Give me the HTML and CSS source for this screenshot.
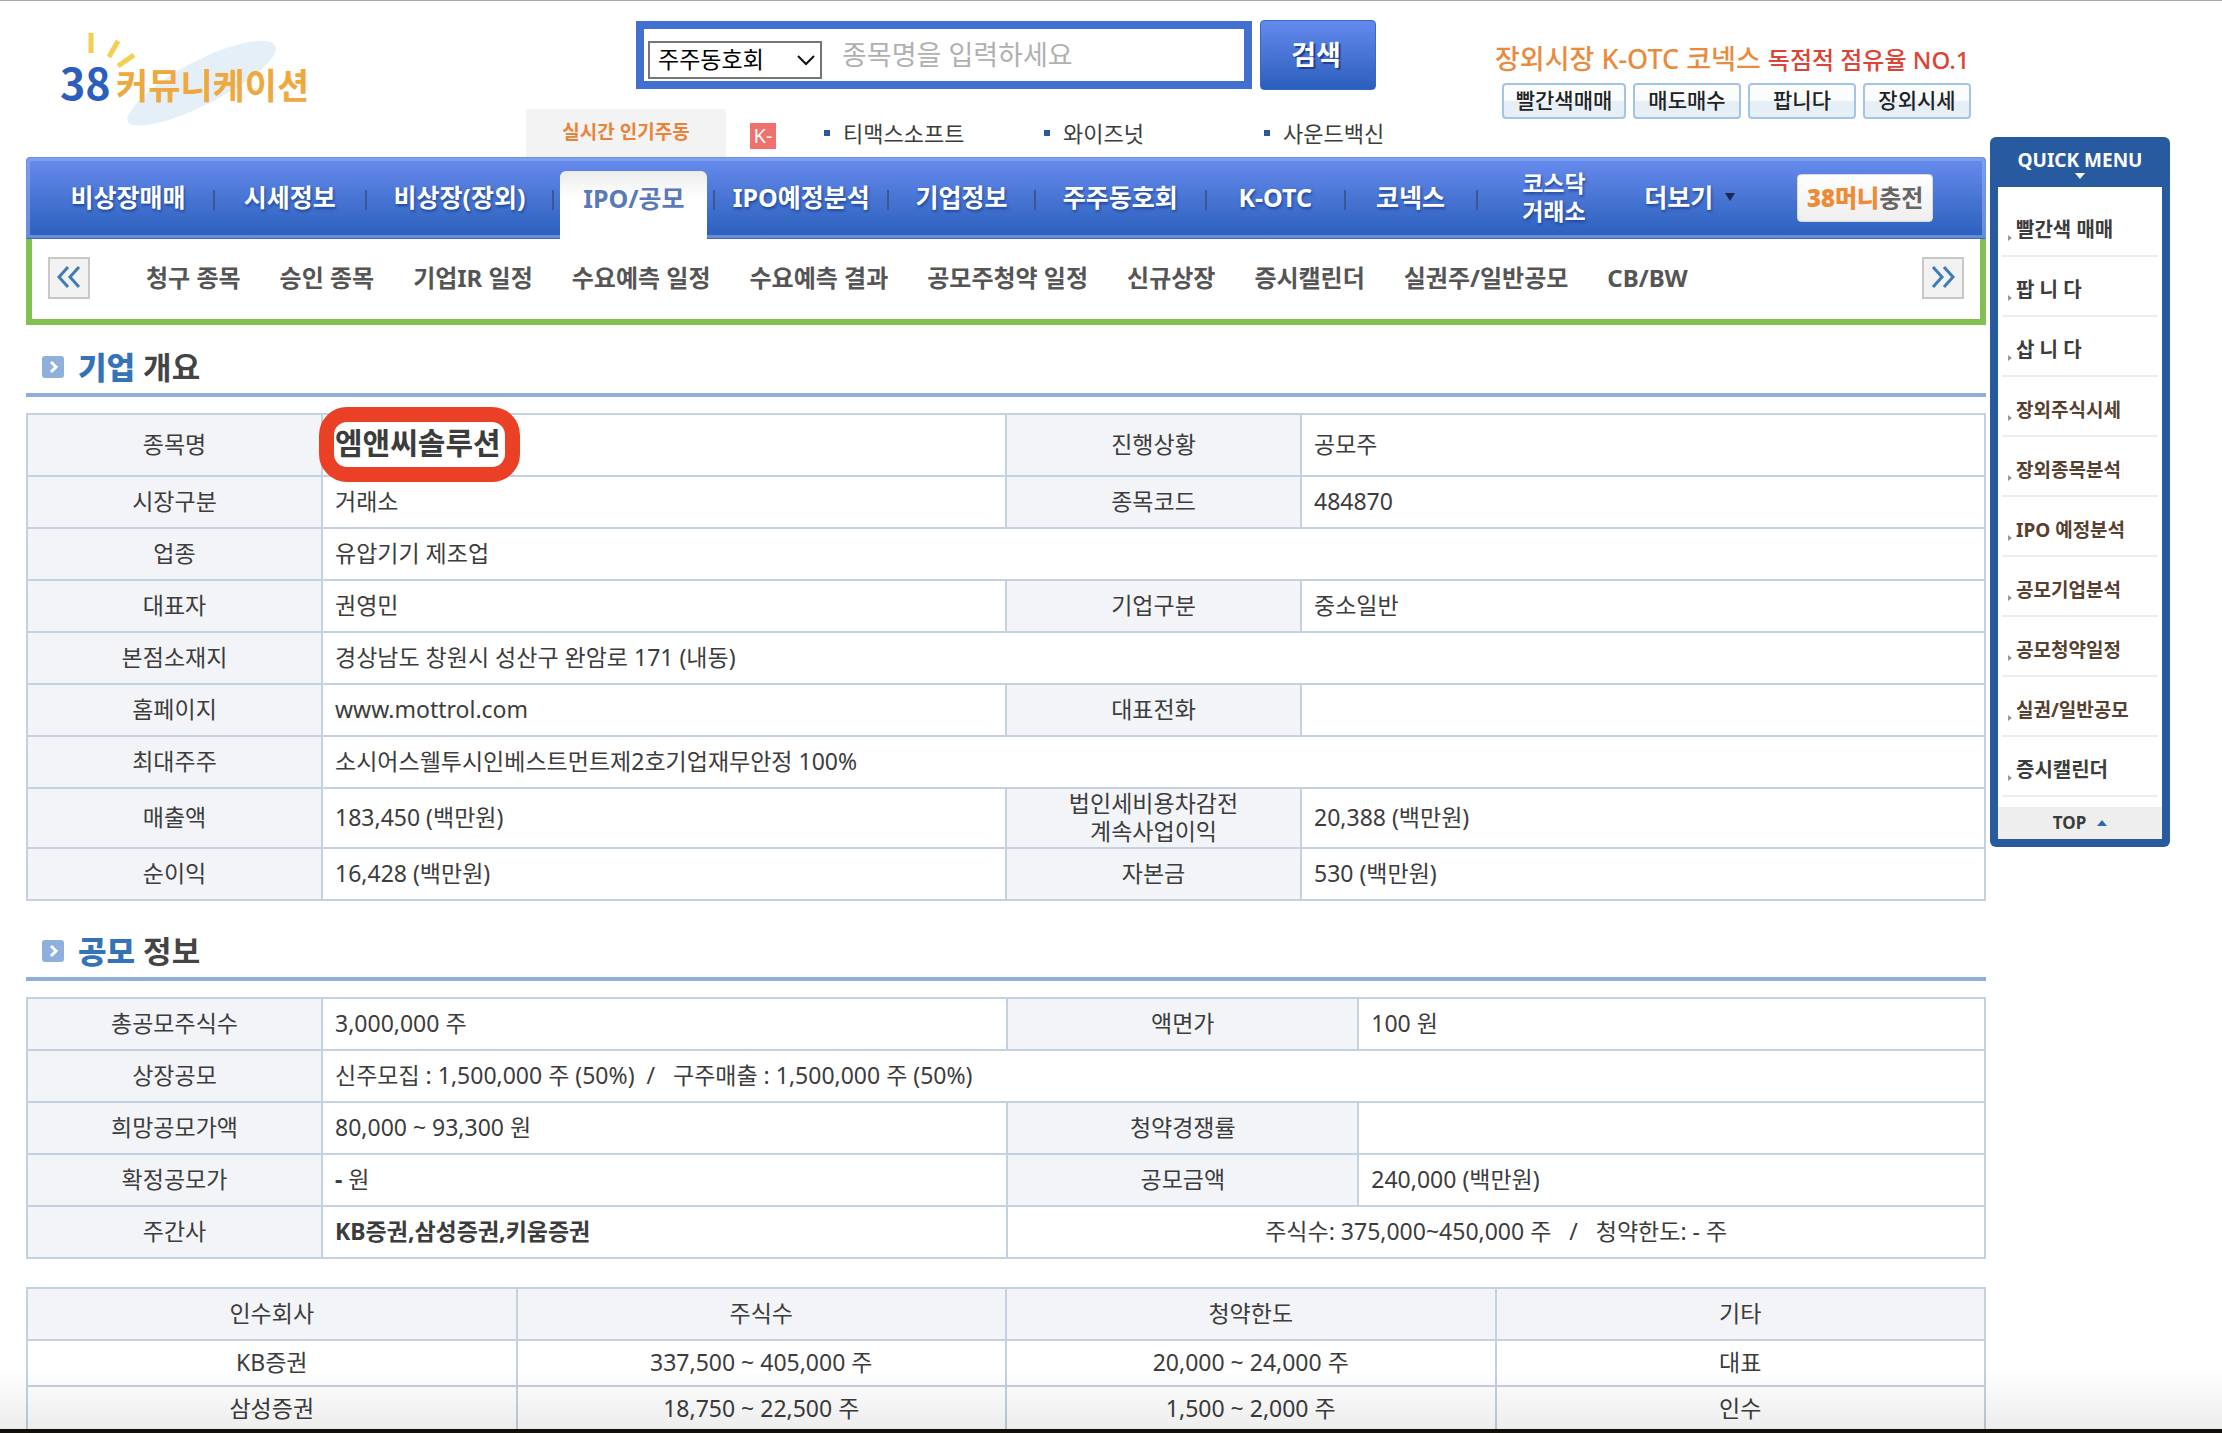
FILE: index.html
```html
<!DOCTYPE html>
<html lang="ko">
<head>
<meta charset="utf-8">
<title>38커뮤니케이션 - 엠앤씨솔루션</title>
<link rel="stylesheet" href="styles.css">
</head>
<body>
<div class="shell">
  <div class="main">
    <header class="header">
      <a class="logo" href="#" aria-label="38커뮤니케이션">
        <svg width="320" height="110" viewBox="0 0 320 110">
          <path d="M92 96 C86 88 118 55 160 35 C200 15 238 8 240 22 C241 36 205 62 165 81 C130 98 98 104 92 96Z" fill="#e4eff7"/>
          <g stroke="#f6cd50" stroke-width="5"><path d="M55 7V27M82 15L73 31M98 29L82 40"/></g>
          <text class="logo-num" x="24" y="74">38</text>
          <text class="logo-name" x="80" y="73">커뮤니케이션</text>
        </svg>
      </a>
      <div class="center">
        <form class="search">
          <div class="search-box">
            <div class="picker">
              <select aria-label="검색 구분"><option>주주동호회</option></select>
              <svg width="18" height="12" viewBox="0 0 18 12"><path d="M1 2L9 10L17 2" fill="none" stroke="#111" stroke-width="2"/></svg>
            </div>
            <input type="text" aria-label="종목명" placeholder="종목명을 입력하세요">
          </div>
          <button type="submit">검색</button>
        </form>
        <div class="hot">
          <strong class="hot-title">실시간 인기주동</strong>
          <span class="hot-mark">K-</span>
          <a href="#">티맥스소프트</a>
          <a href="#">와이즈넛</a>
          <a href="#">사운드백신</a>
        </div>
      </div>
      <div class="promo">
        <p class="slogan">장외시장 K-OTC 코넥스 <em>독점적 점유율 NO.1</em></p>
        <div class="promo-links">
          <button type="button" class="wide">빨간색매매</button>
          <button type="button">매도매수</button>
          <button type="button">팝니다</button>
          <button type="button">장외시세</button>
        </div>
      </div>
    </header>

    <nav class="nav" aria-label="주 메뉴">
      <a href="#" class="first">비상장매매</a>
      <a href="#">시세정보</a>
      <a href="#">비상장(장외)</a>
      <a href="#" class="current"><span>IPO/공모</span></a>
      <a href="#">IPO예정분석</a>
      <a href="#">기업정보</a>
      <a href="#">주주동호회</a>
      <a href="#">K-OTC</a>
      <a href="#">코넥스</a>
      <a href="#" class="plain stacked">코스닥<br>거래소</a>
      <a href="#" class="plain more">더보기<svg width="10" height="8" viewBox="0 0 10 8"><path d="M0 0H10L5 8Z" fill="#1a2a55"/></svg></a>
      <div class="money"><button type="button"><b>38머니</b>충전</button></div>
    </nav>

    <nav class="subnav" aria-label="IPO/공모 메뉴">
      <button type="button" class="arrow" aria-label="이전"><svg width="24" height="22" viewBox="0 0 24 22"><path d="M11 1L2 11L11 21M22 1L13 11L22 21" fill="none" stroke="#3f7cb5" stroke-width="3"/></svg></button>
      <div class="subnav-list">
        <a href="#">청구 종목</a>
        <a href="#">승인 종목</a>
        <a href="#">기업IR 일정</a>
        <a href="#">수요예측 일정</a>
        <a href="#">수요예측 결과</a>
        <a href="#">공모주청약 일정</a>
        <a href="#">신규상장</a>
        <a href="#">증시캘린더</a>
        <a href="#">실권주/일반공모</a>
        <a href="#">CB/BW</a>
      </div>
      <button type="button" class="arrow" aria-label="다음"><svg width="24" height="22" viewBox="0 0 24 22"><path d="M2 1L11 11L2 21M13 1L22 11L13 21" fill="none" stroke="#3f7cb5" stroke-width="3"/></svg></button>
    </nav>

    <h2 class="title"><svg width="22" height="22" viewBox="0 0 22 22"><rect width="22" height="22" rx="3" fill="#8fb0dc"/><path d="M9 6L14 11L9 16" fill="none" stroke="#fff" stroke-width="3"/></svg><span><b>기업</b> 개요</span></h2>
    <table class="info">
      <colgroup><col class="label"><col><col class="label"><col></colgroup>
      <tr class="tall"><th>종목명</th><td><strong class="company">엠앤씨솔루션</strong></td><th>진행상황</th><td>공모주</td></tr>
      <tr><th>시장구분</th><td>거래소</td><th>종목코드</th><td>484870</td></tr>
      <tr><th>업종</th><td colspan="3">유압기기 제조업</td></tr>
      <tr><th>대표자</th><td>권영민</td><th>기업구분</th><td>중소일반</td></tr>
      <tr><th>본점소재지</th><td colspan="3">경상남도 창원시 성산구 완암로 171 (내동)</td></tr>
      <tr><th>홈페이지</th><td><a href="#">www.mottrol.com</a></td><th>대표전화</th><td></td></tr>
      <tr><th>최대주주</th><td colspan="3">소시어스웰투시인베스트먼트제2호기업재무안정 100%</td></tr>
      <tr class="double"><th>매출액</th><td>183,450 (백만원)</td><th>법인세비용차감전<br>계속사업이익</th><td>20,388 (백만원)</td></tr>
      <tr><th>순이익</th><td>16,428 (백만원)</td><th>자본금</th><td>530 (백만원)</td></tr>
    </table>

    <h2 class="title"><svg width="22" height="22" viewBox="0 0 22 22"><rect width="22" height="22" rx="3" fill="#8fb0dc"/><path d="M9 6L14 11L9 16" fill="none" stroke="#fff" stroke-width="3"/></svg><span><b>공모</b> 정보</span></h2>
    <table class="info">
      <colgroup><col class="label"><col class="value"><col class="label-wide"><col></colgroup>
      <tr><th>총공모주식수</th><td>3,000,000 주</td><th>액면가</th><td>100 원</td></tr>
      <tr><th>상장공모</th><td colspan="3">신주모집 : 1,500,000 주 (50%) &nbsp;/ &nbsp; 구주매출 : 1,500,000 주 (50%)</td></tr>
      <tr><th>희망공모가액</th><td>80,000 ~ 93,300 원</td><th>청약경쟁률</th><td></td></tr>
      <tr><th>확정공모가</th><td><b>-</b> 원</td><th>공모금액</th><td>240,000 (백만원)</td></tr>
      <tr><th>주간사</th><td><b>KB증권,삼성증권,키움증권</b></td><td colspan="2" class="mid">주식수: 375,000~450,000 주 &nbsp; / &nbsp; 청약한도: - 주</td></tr>
    </table>

    <table class="info members">
      <thead><tr><th>인수회사</th><th>주식수</th><th>청약한도</th><th>기타</th></tr></thead>
      <tbody>
        <tr><td>KB증권</td><td>337,500 ~ 405,000 주</td><td>20,000 ~ 24,000 주</td><td>대표</td></tr>
        <tr><td>삼성증권</td><td>18,750 ~ 22,500 주</td><td>1,500 ~ 2,000 주</td><td>인수</td></tr>
      </tbody>
    </table>
  </div>

  <aside class="quick">
    <h3>QUICK MENU<svg width="10" height="6" viewBox="0 0 10 6"><path d="M0 0H10L5 6Z" fill="#fff"/></svg></h3>
    <ul>
      <li><a href="#">빨간색 매매</a></li>
      <li><a href="#">팝 니 다</a></li>
      <li><a href="#">삽 니 다</a></li>
      <li class="brown"><a href="#">장외주식시세</a></li>
      <li class="brown"><a href="#">장외종목분석</a></li>
      <li class="brown"><a href="#">IPO 예정분석</a></li>
      <li class="brown"><a href="#">공모기업분석</a></li>
      <li class="brown"><a href="#">공모청약일정</a></li>
      <li class="brown"><a href="#">실권/일반공모</a></li>
      <li><a href="#">증시캘린더</a></li>
    </ul>
    <a class="top" href="#">TOP<svg width="10" height="6" viewBox="0 0 10 6"><path d="M0 6H10L5 0Z" fill="#3068b0"/></svg></a>
  </aside>
</div>
<div class="page-edge"></div>
</body>
</html>
```

FILE: styles.css
```css
* { box-sizing: border-box; }

body {
  margin: 0;
  border-top: 1px solid #a0b29f;
  background: #fff;
  color: #3c3c3c;
  font: 23px/28px "Noto Sans", "Noto Sans CJK KR", sans-serif;
}

a { color: inherit; text-decoration: none; }
button, input, select { font-family: inherit; color: inherit; }
svg { display: block; flex: none; }

.shell {
  display: flex;
  align-items: flex-start;
  gap: 4px;
  padding: 0 52px 0 26px;
}
.main { flex: 1; min-width: 0; }

/* Header */
.header {
  display: grid;
  grid-template-columns: 500px 1fr 491px;
  height: 156px;
}
.logo { padding: 25px 0 0 10px; }
.logo-num { font: 700 43px "Noto Sans CJK KR", sans-serif; fill: #2c5fbd; }
.logo-name { font: 700 35px "Noto Sans CJK KR", sans-serif; fill: #efa83e; }

.center {
  display: flex;
  flex-direction: column;
  justify-content: space-between;
}
.search {
  display: flex;
  align-items: center;
  gap: 8px;
  padding: 19px 0 0 110px;
}
.search-box {
  display: flex;
  align-items: center;
  width: 616px;
  height: 68px;
  padding: 4px;
  border: 8px solid #4170d0;
}
.picker {
  display: grid;
  align-items: center;
  width: 174px;
  margin-top: 10px;
}
.picker select, .picker svg { grid-area: 1 / 1; }
.picker select {
  width: 100%;
  height: 38px;
  padding: 0 8px 2px;
  border: 2px solid #767676;
  border-radius: 0;
  background: #fff;
  color: #000;
  font-size: 23px;
  appearance: none;
}
.picker svg { justify-self: end; margin-right: 7px; pointer-events: none; }
.search-box input {
  flex: 1;
  min-width: 0;
  height: 44px;
  padding: 0 20px 2px;
  border: 0;
  outline: 0;
  background: none;
  font-size: 27px;
}
.search-box input::placeholder { color: #b0b0b0; }
.search button {
  width: 116px;
  height: 70px;
  padding: 0 4px 4px 0;
  border: 1px solid #3a68c8;
  border-radius: 4px;
  background: linear-gradient(#6489ee, #2b5fbc);
  color: #fff;
  font-size: 27px;
  font-weight: 700;
  text-shadow: 2px 2px 1px #1d3f8c;
}

.hot { display: flex; align-items: center; height: 48px; font-size: 22px; }
.hot-title {
  width: 200px;
  padding-bottom: 2px;
  background: #f3f3f3;
  color: #e8833a;
  font-size: 19px;
  line-height: 46px;
  text-align: center;
}
.hot-mark {
  width: 26px;
  margin: 6px 48px 0 24px;
  background: #f0706c;
  color: #fff;
  font-size: 20px;
  line-height: 26px;
  text-align: center;
}
.hot a { display: flex; align-items: center; gap: 13px; width: 220px; }
.hot a::before { content: ""; width: 6px; height: 6px; background: #2a5a9c; }

.promo { padding-top: 42px; }
.slogan { margin: 0; color: #e88b3e; font-size: 27px; line-height: 32px; font-weight: 500; white-space: nowrap; }
.slogan em { color: #dc4436; font-size: 24px; font-style: normal; }
.promo-links { display: flex; gap: 7px; padding: 7px 0 0 7px; }
.promo-links button {
  width: 108px;
  height: 36px;
  padding: 0 0 3px;
  border: 2px solid #a3c4e6;
  border-radius: 4px;
  background: linear-gradient(#fafcfe 50%, #e6eef6 50%);
  color: #222;
  font-size: 21px;
  line-height: 28px;
  font-weight: 500;
}
.promo-links .wide { width: 124px; }

/* Main menu */
.nav {
  display: grid;
  grid-template-columns: 188fr 152fr 188fr 161fr 174fr 147fr 171fr 139fr 132fr 155fr 113fr 240fr;
  height: 82px;
  border: 1px solid #6d90de;
  border-bottom-color: #4a66b0;
  border-radius: 4px 4px 0 0;
  background: linear-gradient(#678bee, #2a5fbb);
  box-shadow: inset 0 0 0 3px #8eabee99;
  color: #fff;
  font-size: 25px;
  font-weight: 700;
}
.nav > a {
  display: flex;
  align-items: center;
  justify-content: center;
  padding: 0 2px 2px 0;
  background: linear-gradient(#3a5796, #3a5796) right 32px / 2px 20px no-repeat;
  text-shadow: 1px 2px 3px #1f4596;
  white-space: nowrap;
}
.nav > a.first { padding-left: 16px; }
.nav > a.plain { background: none; }
.nav > a.stacked { font-size: 23px; line-height: 28px; }
.nav > a.more { gap: 12px; padding-left: 4px; }
.nav > a.current { align-items: stretch; padding: 13px 8px 0 6px; text-shadow: none; }
.current span {
  flex: 1;
  margin-bottom: -1px;
  border-radius: 6px 6px 0 0;
  background: linear-gradient(#ececec, #fff 40%);
  color: #5a79b8;
  line-height: 54px;
  text-align: center;
}
.money { display: flex; align-items: center; justify-content: center; }
.money button {
  width: 136px;
  height: 48px;
  padding: 0 0 4px;
  border: 1px solid #d8d8d8;
  border-radius: 4px;
  background: linear-gradient(#fff, #eee);
  color: #666;
  font-size: 24px;
  font-weight: 700;
}
.money b { color: #ee8b35; }

.subnav {
  display: flex;
  align-items: center;
  height: 86px;
  padding: 0 16px 2px;
  border: solid #82c14f;
  border-width: 0 6px 6px;
}
.arrow {
  display: grid;
  place-items: center;
  width: 42px;
  height: 42px;
  padding: 0 0 2px;
  border: 2px solid #c8c8c8;
  background: #f2f2f2;
}
.subnav-list {
  display: flex;
  flex: 1;
  gap: 39px;
  padding-left: 56px;
  color: #555;
  font-size: 24px;
  font-weight: 700;
  white-space: nowrap;
}

/* Sections */
.title {
  display: flex;
  align-items: center;
  gap: 14px;
  height: 72px;
  margin: 0 0 16px;
  padding: 16px 16px 0;
  border-bottom: 4px solid #8fafdb;
  color: #444;
  font-size: 31px;
  line-height: 40px;
}
.title b { color: #3573b9; }

.info {
  width: 100%;
  border-collapse: collapse;
  table-layout: fixed;
}
.info + .title { margin-top: 8px; }
.label { width: 295px; }
.label-wide { width: 351px; }
.value { width: 35%; }
.info th, .info td {
  padding: 0 12px 2px;
  border: 2px solid #c4d1e0;
  text-align: left;
}
.info th { background: #f2f4f8; font-weight: 400; text-align: center; }
.info tr { height: 52px; }
.info .tall { height: 62px; }
.info .double { height: 60px; }
.info .mid, .members td { text-align: center; }
.info.members { margin-top: 28px; }
.members tbody tr { height: 46px; }

.company { position: relative; font-size: 30px; }
.company::after {
  content: "";
  position: absolute;
  inset: -15px -19px -19px -16px;
  border: 15px solid #ea4025;
  border-radius: 28px;
}

/* Quick menu */
.quick {
  flex: none;
  width: 180px;
  margin-top: 136px;
  padding: 0 8px 8px;
  border-radius: 6px;
  background: #285a9f;
}
.quick h3 {
  display: flex;
  flex-direction: column;
  align-items: center;
  height: 50px;
  margin: 0;
  padding-top: 11px;
  color: #fff;
  font-size: 19px;
  line-height: 25px;
  white-space: nowrap;
}
.quick ul {
  margin: 0;
  padding: 10px 4px;
  background: #fff;
  list-style: none;
}
.quick li {
  height: 60px;
  padding: 7px 0 0 6px;
  border-bottom: 2px solid #eee;
  font-size: 20px;
  line-height: 52px;
  font-weight: 700;
  white-space: nowrap;
}
.quick li a { display: flex; align-items: center; gap: 4px; }
.quick li a::before {
  content: "";
  margin-top: 16px;
  border: solid transparent;
  border-width: 3px 0 3px 4px;
  border-left-color: #999;
}
.quick .brown { color: #57402f; font-size: 19px; }
.top {
  display: flex;
  align-items: center;
  justify-content: center;
  gap: 11px;
  height: 32px;
  background: #eee;
  font-size: 17px;
  font-weight: 700;
}

/* Fade and dark line along the window's lower edge */
.page-edge {
  position: fixed;
  inset: auto 0 0;
  height: 64px;
  border-bottom: 4px solid #120f08;
  background: linear-gradient(#0000, #00000012);
  pointer-events: none;
}
```
